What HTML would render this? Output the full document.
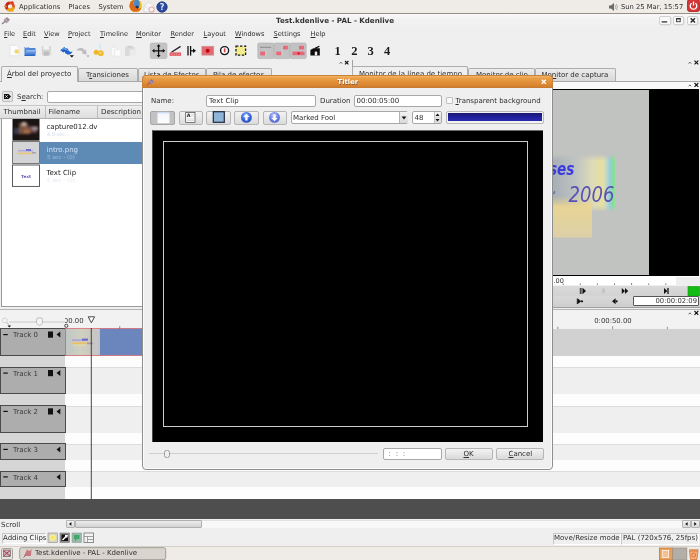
<!DOCTYPE html>
<html><head><meta charset="utf-8"><title>Kdenlive</title>
<style>
*{box-sizing:border-box;margin:0;padding:0}
html,body{width:700px;height:560px;overflow:hidden;background:#efefef;font-family:"DejaVu Sans","Liberation Sans",sans-serif;font-size:7px;color:#2e2e2e}
.a{position:absolute}
.t{position:absolute;z-index:3;white-space:nowrap;line-height:10px;font-size:7px}
u{text-decoration:underline;text-underline-offset:.6px;text-decoration-thickness:0.6px}
.tab{position:absolute;top:68px;height:13px;background:linear-gradient(#ececec,#d8d8d8);border:1px solid #adadad;border-bottom:none;border-radius:2px 2px 0 0}
.tab.on{top:65px;height:17px;background:#efefef;z-index:2}
.trk{position:absolute;left:0;width:66px;background:#adadad;border:1px solid #4a4a4a}
.btn{position:absolute;background:linear-gradient(#f3f3f3,#dadada);border:1px solid #b6b6b6;border-radius:2px}
.inp{position:absolute;background:#fff;border:1px solid #a8a8a8;border-radius:2px}
svg{position:absolute;overflow:visible}
</style></head><body>
<div id="root" style="position:absolute;left:0;top:0;width:700px;height:560px;will-change:transform">
<div class="a" style="left:0;top:0;width:700px;height:14px;background:#efebe7;border-bottom:1px solid #979088"></div>
<svg style="left:4px;top:0" width="12" height="13" viewBox="0 0 12 13"><circle cx="6" cy="6.5" r="3.6" fill="none" stroke="#d9541e" stroke-width="2.6"/><circle cx="6" cy="6.5" r="3.6" fill="none" stroke="#f0a513" stroke-width="2.6" stroke-dasharray="7.5 15.1" stroke-dashoffset="-1"/><circle cx="6" cy="6.5" r="3.6" fill="none" stroke="#c2221e" stroke-width="2.6" stroke-dasharray="7.5 15.1" stroke-dashoffset="-8.5"/><circle cx="1.6" cy="6.5" r="1.3" fill="#e8702a"/><circle cx="8.3" cy="2.6" r="1.3" fill="#d33"/><circle cx="8.3" cy="10.4" r="1.3" fill="#f0a513"/></svg>
<div class="t" style="left:19px;top:1.500px;font-size:6.750px">Applications</div>
<div class="t" style="left:68.500px;top:1.500px;font-size:6.750px">Places</div>
<div class="t" style="left:98.500px;top:1.500px;font-size:6.750px">System</div>
<svg style="left:129px;top:-1px" width="14" height="14" viewBox="0 0 14 14"><defs><clipPath id="ffc"><circle cx="6.700" cy="6.700" r="6.300"/></clipPath></defs><g clip-path="url(#ffc)"><rect width="14" height="14" fill="#efc01e"/><ellipse cx="7.800" cy="4.500" rx="2.900" ry="4.600" fill="#4a8ac8"/><ellipse cx="8" cy="8.300" rx="1.700" ry="1.900" fill="#26325e"/><path d="M0 0h6q-2.200 3-1 6.200q1.300 3.300 4.600 3.600q2-.1 3-1.400q-.6 3.600-4 4.800h-8.600z" fill="#e0681a"/><path d="M4.500 12.800q3 .6 5.500-1" stroke="#f0a020" stroke-width=".8" fill="none"/></g></svg>
<svg style="left:143px;top:1px" width="12" height="12" viewBox="0 0 12 12"><path d="M1 5 L6 1 L11 5 L11 11 L1 11Z" fill="#f6f6f6" stroke="#cfcfcf" stroke-width=".6"/><path d="M1 5 L6 8 L11 5" fill="none" stroke="#d8d8d8" stroke-width=".6"/><circle cx="8.5" cy="8.5" r="2.6" fill="#faf0f0" stroke="#dc9098" stroke-width=".8"/></svg>
<svg style="left:156px;top:1px" width="12" height="12" viewBox="0 0 12 12"><circle cx="6" cy="6" r="5.2" fill="#2a4a9c" stroke="#1c3478" stroke-width=".8"/><text x="6" y="9" font-size="8" font-weight="bold" fill="#dfe8ff" text-anchor="middle" font-family="DejaVu Sans">?</text></svg>
<svg style="left:608px;top:2px" width="10" height="10" viewBox="0 0 10 10"><path d="M1 3.5h2l3-2.5v8l-3-2.5h-2z" fill="#6a6a6a"/><path d="M7.2 3q1.2 2 0 4M8.4 2q2 3 0 6" stroke="#9a9a9a" stroke-width=".7" fill="none"/></svg>
<div class="t" style="left:621px;top:2px;font-size:6.750px">Sun 25 Mar, 15:57</div>
<svg style="left:687px;top:-1px" width="13" height="13" viewBox="0 0 13 13"><rect x=".5" y=".5" width="12" height="12" rx="2" fill="#d43535" stroke="#a82020" stroke-width=".8"/><path d="M4.6 4.2 A3.3 3.3 0 1 0 8.4 4.2" fill="none" stroke="#fff" stroke-width="1.3"/><path d="M6.5 2.6v4" stroke="#fff" stroke-width="1.3"/></svg>

<div class="a" style="left:0;top:14px;width:700px;height:14px;background:linear-gradient(#f9f9f9,#f2f2f2 35%,#efefef)"></div>
<svg style="left:1px;top:16px" width="10" height="9" viewBox="0 0 10 9"><path d="M2.500 4.500 L6 1 L9 3.800 L5.500 7.300Z" fill="#a08c98"/><path d="M1 8 L4 5.500" stroke="#8a7884" stroke-width="1.200"/><path d="M3.500 2.800 L7.200 6.200" stroke="#bca8b4" stroke-width="1.200"/></svg>
<div class="t" style="left:276px;top:16px;font-weight:bold;font-size:7.1px;color:#333">Test.kdenlive - PAL - Kdenlive</div>
<div class="btn" style="left:659px;top:15.500px;width:11.500px;height:9.300px;background:#f9f9f9;border-color:#d0d0d0;box-shadow:.5px .5px 0 #dcdcdc"></div>
<div class="btn" style="left:672.5px;top:15.500px;width:11.500px;height:9.300px;background:#f9f9f9;border-color:#d0d0d0;box-shadow:.5px .5px 0 #dcdcdc"></div>
<div class="btn" style="left:686.5px;top:15.500px;width:11.500px;height:9.300px;background:#f9f9f9;border-color:#d0d0d0;box-shadow:.5px .5px 0 #dcdcdc"></div>
<svg style="left:659px;top:15px" width="40" height="11" viewBox="0 0 40 11"><path d="M2.600 6.900h5.600" stroke="#333" stroke-width="1.300"/><rect x="17.600" y="3.700" width="3.600" height="3" fill="none" stroke="#333" stroke-width=".9"/><path d="M17.200 3.700h4.400" stroke="#333" stroke-width="1.400"/><path d="M31.700 3.300l4.300 4.200M36 3.300l-4.300 4.200" stroke="#222" stroke-width="1.300"/></svg>

<div class="t" style="left:4px;top:29px;font-size:6.600px"><u>F</u>ile</div>
<div class="t" style="left:23px;top:29px;font-size:6.600px"><u>E</u>dit</div>
<div class="t" style="left:44px;top:29px;font-size:6.600px"><u>V</u>iew</div>
<div class="t" style="left:68px;top:29px;font-size:6.600px"><u>P</u>roject</div>
<div class="t" style="left:100px;top:29px;font-size:6.600px"><u>T</u>imeline</div>
<div class="t" style="left:136px;top:29px;font-size:6.600px"><u>M</u>onitor</div>
<div class="t" style="left:170.5px;top:29px;font-size:6.600px"><u>R</u>ender</div>
<div class="t" style="left:203.5px;top:29px;font-size:6.600px"><u>L</u>ayout</div>
<div class="t" style="left:235px;top:29px;font-size:6.600px"><u>W</u>indows</div>
<div class="t" style="left:273.5px;top:29px;font-size:6.600px"><u>S</u>ettings</div>
<div class="t" style="left:310.5px;top:29px;font-size:6.600px"><u>H</u>elp</div>

<svg style="left:0;top:41px" width="350" height="20" viewBox="0 41 350 20">
<defs>
<linearGradient id="gfold" x1="0" y1="0" x2="0" y2="1"><stop offset="0" stop-color="#9ec4f2"/><stop offset="1" stop-color="#1f5fc4"/></linearGradient>
<filter id="b3"><feGaussianBlur stdDeviation="0.5"/></filter>
</defs>
<!-- new -->
<path d="M10 45.3h6l3 3v7.5h-9z" fill="#fdfdfd" stroke="#d8d8d8" stroke-width=".6"/>
<circle cx="16.7" cy="51.5" r="2.3" fill="#f4d774" filter="url(#b3)"/>
<!-- open -->
<path d="M24.5 47h4l1 1h6v8h-11z" fill="#4f86d6"/>
<path d="M26.5 50h10l-1.8 6h-10.2z" fill="url(#gfold)"/>
<path d="M25 47.6h3.3" stroke="#dbe9fb" stroke-width=".8"/>
<!-- save disabled -->
<rect x="41.8" y="46" width="9" height="9.6" rx=".8" fill="#d4d4d4"/>
<rect x="43.5" y="46" width="5.6" height="3.6" fill="#f2f2f2"/>
<rect x="43.8" y="51.6" width="5" height="4" fill="#bdbdbd"/>
<!-- undo -->
<path d="M60.2 50.2 L64.5 46.8 L65.2 48.6 Q68 47.6 68.6 50.6 Q69.6 52.6 72.6 51.4 Q71 55 67.4 54.4 Q64.6 53.6 64.6 51.4 L63.4 52.6Z" fill="#1f62cf"/>
<path d="M61.6 50 L64.2 48 L65 49.6 Q67.2 49 67.8 50.8" fill="none" stroke="#7fb2f0" stroke-width=".8"/>
<path d="M69.6 55.2h4.4l-2.2 2.2z" fill="#111"/>
<!-- redo disabled -->
<path d="M76.4 50.6 Q77.6 47.4 81.4 48 Q84 48.4 84.6 50.6 L86 49.6 L86.6 54.6 L81.6 53.6 L83 52.6 Q82 50.6 80 50.6 Q78 50.4 76.4 50.6Z" fill="#bcbcbc"/>
<path d="M86.6 55.6h2.8l-1.4 1.6z" fill="#9a9a9a"/>
<!-- yellow -->
<rect x="99.6" y="43.6" width="1.2" height="5" fill="#c5e2f3"/>
<circle cx="96.2" cy="52.2" r="2.5" fill="#efb62a"/>
<circle cx="100.8" cy="53.2" r="2.9" fill="#f0bd30"/>
<circle cx="100.4" cy="53" r="1" fill="#f8dc86"/>
<!-- copy disabled -->
<path d="M111.4 47.4h4l1.6 1.6v6.8h-5.600z" fill="#f9f9f9" stroke="#e0e0e0" stroke-width=".5"/>
<path d="M114.600 49.400h4.400l1.800 1.800v5h-6.200z" fill="#fbfbfb" stroke="#dedede" stroke-width=".5"/>
<path d="M113 45.400l1.600 1.600" stroke="#e2e2e2" stroke-width="1"/>
<!-- paste disabled -->
<rect x="125" y="46.600" width="9.600" height="9.400" rx="1" fill="#dadada"/>
<rect x="127.600" y="45.800" width="4.400" height="2" fill="#cfcfcf"/>
<rect x="129.600" y="49.600" width="6.400" height="6.600" fill="#eaeaea"/>
<!-- move tool pressed -->
<rect x="150.300" y="43" width="16.600" height="15.600" rx="1.500" fill="#c3c3c3" stroke="#b0b0b0" stroke-width=".6"/>
<path d="M158.600 45.400v10.800M153.200 50.800h10.800" stroke="#111" stroke-width="1.300"/>
<path d="M158.600 44.200l-2 2.400h4zM158.600 57.400l-2-2.400h4zM152 50.800l2.400-2v4zM165.200 50.800l-2.400-2v4z" fill="#111"/>
<!-- razor -->
<path d="M171.400 52.200 L180.600 46.400" stroke="#222" stroke-width="1.300"/>
<rect x="169.600" y="52.400" width="11.400" height="3.400" fill="#e05a60"/>
<path d="M171 54.100h9" stroke="#f2a8a8" stroke-width=".8" stroke-dasharray="1.500 1"/>
<!-- spacer -->
<path d="M188 46v9.600" stroke="#111" stroke-width="1.300"/>
<path d="M190.600 46v9.600" stroke="#111" stroke-width="1.300"/>
<path d="M191 50.800h3" stroke="#111" stroke-width="1.200"/>
<path d="M193 48.600l3 2.200l-3 2.200z" fill="#111"/>
<!-- record -->
<rect x="201.800" y="46.200" width="12" height="9" fill="#e06a72" stroke="#c9a0a4" stroke-width=".6"/>
<circle cx="207.600" cy="50.800" r="2" fill="#c80010"/>
<!-- circle -->
<circle cx="224.600" cy="50.600" r="4" fill="#fff" stroke="#151515" stroke-width="1.400"/>
<rect x="223.800" y="48.400" width="1.700" height="4" fill="#d64048"/>
<!-- yellow dashed -->
<rect x="236" y="46.200" width="9.600" height="9" fill="#f3ec8a" stroke="#1a1a1a" stroke-width="1.300" stroke-dasharray="2.400 1.600"/>
<!-- pressed 3 buttons -->
<rect x="257.800" y="43" width="16" height="15.600" rx="1.500" fill="#c2c2c2" stroke="#adadad" stroke-width=".6"/>
<rect x="274" y="43" width="16" height="15.600" rx="1.500" fill="#c2c2c2" stroke="#adadad" stroke-width=".6"/>
<rect x="290.200" y="43" width="16" height="15.600" rx="1.500" fill="#c2c2c2" stroke="#adadad" stroke-width=".6"/>
<path d="M260.500 47.400h10.600" stroke="#6a6a6a" stroke-width="1.200" stroke-dasharray="1 1"/>
<rect x="260.200" y="51.600" width="4.800" height="3.800" fill="#e8687a"/>
<path d="M266 49v7" stroke="#d2d2d2" stroke-width=".6"/>
<rect x="276.200" y="51.600" width="5" height="3.600" fill="#e8687a"/>
<rect x="282.800" y="45.800" width="5" height="3.600" fill="#e8687a"/>
<path d="M282.200 45v11" stroke="#d6d6d6" stroke-width=".6"/>
<rect x="292.400" y="51.600" width="5.600" height="3.600" fill="#e8687a"/>
<rect x="299" y="45.800" width="5" height="3.600" fill="#e8687a"/>
<rect x="298" y="51.600" width="6.500" height="3.600" fill="#e8687a"/>
<circle cx="298.600" cy="53.400" r="1.100" fill="#d01010"/>
<!-- black box icon -->
<path d="M310.400 55.400v-5.400l3-1.800h6.400v7.200z" fill="#0c0c0c"/>
<path d="M315 48.400l4.400-2.200" stroke="#0c0c0c" stroke-width="1.200"/>
<rect x="314.800" y="51.600" width="2.400" height="3.800" fill="#efefef"/>
<!-- ^ x -->
<path d="M339.600 63.600l1.300-1.500l1.300 1.500" stroke="#444" stroke-width=".8" fill="none"/>
<path d="M345 61l3.400 3.400M348.400 61l-3.400 3.400" stroke="#111" stroke-width="1.100"/>
<path d="M688.600 63.600l1.300-1.500l1.300 1.500" stroke="#444" stroke-width=".8" fill="none"/>
<path d="M694.500 60.600l3.800 3.800M698.300 60.600l-3.800 3.800" stroke="#111" stroke-width="1.100"/>
</svg>
<div class="t" style="left:334.600px;top:44.800px;font-family:'Liberation Serif',serif;font-size:12.500px;font-weight:bold;line-height:13px;color:#1a1a1a">1</div>
<div class="t" style="left:351.300px;top:44.800px;font-family:'Liberation Serif',serif;font-size:12.500px;font-weight:bold;line-height:13px;color:#1a1a1a">2</div>
<div class="t" style="left:367.600px;top:44.800px;font-family:'Liberation Serif',serif;font-size:12.500px;font-weight:bold;line-height:13px;color:#1a1a1a">3</div>
<div class="t" style="left:384px;top:44.800px;font-family:'Liberation Serif',serif;font-size:12.500px;font-weight:bold;line-height:13px;color:#1a1a1a">4</div>

<div class="a" style="left:0;top:81px;width:700px;height:1px;background:#a8a8a8"></div>
<div class="tab on" style="left:1px;width:77px;top:66px;height:16px"></div>
<div class="tab" style="left:78px;width:60px"></div>
<div class="tab" style="left:138px;width:68px"></div>
<div class="tab" style="left:206px;width:66px"></div>
<div class="t" style="left:7px;top:69px"><u>Á</u>rbol del proyecto</div>
<div class="t" style="left:86px;top:69.700px">T<u>r</u>ansiciones</div>
<div class="t" style="left:144px;top:69.700px">Lista de Efectos</div>
<div class="t" style="left:213px;top:69.700px">Pila de efectos</div>
<div class="a" style="left:351.500px;top:60px;width:1px;height:8px;background:#a2a2a2"></div>
<div class="tab on" style="left:351.500px;width:116.500px;top:65.600px;height:16.400px"></div>
<div class="tab" style="left:468px;width:67px"></div>
<div class="tab" style="left:535px;width:81px"></div>
<div class="t" style="left:359px;top:69.300px">Monitor de la línea de tiempo</div>
<div class="t" style="left:476px;top:69.700px">Monitor de clip</div>
<div class="t" style="left:541.5px;top:69.700px">Mo<u>n</u>itor de captura</div>

<div class="a" style="left:0;top:82px;width:143px;height:228px;background:#efefef"></div>
<!-- search row -->
<svg style="left:2px;top:91px" width="11" height="11" viewBox="0 0 11 11"><rect x=".4" y=".4" width="10.200" height="10.200" rx="1.500" fill="#e4e4e4" stroke="#a8a8a8" stroke-width=".7"/><path d="M2 3h4.500l2.500 2.500l-2.500 2.500h-4.500z" fill="#111"/><path d="M3.300 4.300l2.400 2.400M5.700 4.300l-2.400 2.400" stroke="#fff" stroke-width=".8"/></svg>
<div class="t" style="left:17px;top:91.500px">S<u>e</u>arch:</div>
<div class="inp" style="left:47px;top:90.500px;width:100px;height:12.500px"></div>
<!-- header -->
<div class="a" style="left:0;top:105px;width:143px;height:13.500px;background:linear-gradient(#eeeeee,#dedede);border-top:1px solid #c8c8c8;border-bottom:1px solid #b0b0b0"></div>
<div class="a" style="left:45px;top:106px;width:1px;height:12px;background:#bcbcbc"></div>
<div class="a" style="left:97px;top:106px;width:1px;height:12px;background:#bcbcbc"></div>
<div class="t" style="left:3.500px;top:106.500px">Thumbnail</div>
<div class="t" style="left:48.500px;top:106.500px">Filename</div>
<div class="t" style="left:101px;top:106.500px">Description</div>
<!-- list -->
<div class="a" style="left:1px;top:118.500px;width:142px;height:188px;background:#fff;border-left:1px solid #9a9a9a;border-bottom:1px solid #9a9a9a"></div>
<div class="a" style="left:40px;top:141.500px;width:103px;height:22px;background:#5e8bb6"></div>
<svg style="left:12.100px;top:119px" width="28" height="68" viewBox="0 0 28 68">
<defs><filter id="b1"><feGaussianBlur stdDeviation="1.200"/></filter><filter id="b2"><feGaussianBlur stdDeviation=".6"/></filter>
<clipPath id="c1"><rect x=".5" y="0" width="27" height="21.600"/></clipPath></defs>
<rect x=".5" y="0" width="27" height="21.600" fill="#1a1413"/>
<g clip-path="url(#c1)" filter="url(#b1)"><rect x="7" y="4" width="9" height="11" fill="#7a5240"/><rect x="16" y="7" width="9" height="7" fill="#6a4a48"/><rect x="10" y="3" width="4" height="4" fill="#b8a8a0"/><rect x="20" y="8" width="6" height="3" fill="#9a8a90"/><rect x="2" y="9" width="5" height="6" fill="#3a3a52"/><rect x="12" y="10" width="6" height="5" fill="#a06848"/></g>
<rect x=".5" y="22.600" width="27" height="21.800" fill="#d2d4d6" stroke="#5a5a5a" stroke-width=".8"/>
<g filter="url(#b2)"><rect x="6" y="31" width="15" height="1.500" fill="#b8a8d8"/><rect x="5" y="33.500" width="16" height="1.800" fill="#e8c880"/><rect x="14" y="30" width="5" height="2" fill="#7070d0"/><rect x="20" y="33" width="4" height="1.500" fill="#a8a0b8"/></g>
<rect x=".5" y="46" width="27" height="21.400" fill="#fff" stroke="#4a4a4a" stroke-width=".9"/>
<text x="14" y="59.400" font-size="4.200" font-weight="bold" fill="#5f58b4" text-anchor="middle" font-family="DejaVu Sans">Text</text>
</svg>
<div class="t" style="left:46.500px;top:121.600px;color:#222">capture012.dv</div>
<div class="t" style="left:47px;top:128.500px;font-size:5px;color:#d0d8ea">4.8 sec...</div>
<div class="t" style="left:46.500px;top:144.600px;color:#cfe0f6">intro.png</div>
<div class="t" style="left:47px;top:152px;font-size:5.500px;color:#9dbbd8">5 sec - (0)</div>
<div class="t" style="left:46.500px;top:167.500px;color:#222">Text Clip</div>
<div class="t" style="left:47px;top:175px;font-size:5.500px;color:#e2e6ee">5 sec - (0)</div>

<!-- dock header -->
<div class="a" style="left:553px;top:82px;width:147px;height:7px;background:#f9f9f9"></div>
<svg style="left:0;top:0" width="700" height="100" viewBox="0 0 700 100"><path d="M688.600 86.300l1.300-1.500l1.300 1.500" stroke="#444" stroke-width=".8" fill="none"/><path d="M694.500 83l3.800 3.800M698.300 83l-3.800 3.800" stroke="#111" stroke-width="1.100"/></svg>
<div class="a" style="left:553px;top:88.600px;width:146px;height:187.600px;background:#000"></div>
<div class="a" style="left:553px;top:90px;width:96px;height:184.500px;background:#c1c3c1"></div>
<svg style="left:553px;top:90px;overflow:hidden" width="96" height="185" viewBox="553 90 96 185">
<defs>
<linearGradient id="mg1" x1="0" y1="0" x2="1" y2="0"><stop offset="0" stop-color="#a6aeb6"/><stop offset=".35" stop-color="#bcc2c0"/><stop offset=".62" stop-color="#dcdab8"/><stop offset=".8" stop-color="#e6e0a0"/><stop offset=".86" stop-color="#b8d8d0"/><stop offset=".9" stop-color="#98cce0"/><stop offset=".95" stop-color="#84e096"/><stop offset="1" stop-color="#a0dca0"/></linearGradient>
<linearGradient id="mg2" x1="0" y1="0" x2="0" y2="1"><stop offset="0" stop-color="#c1c2c1" stop-opacity="1"/><stop offset=".12" stop-color="#c1c2c1" stop-opacity="0"/><stop offset=".9" stop-color="#c1c2c1" stop-opacity="0"/><stop offset="1" stop-color="#c1c2c1" stop-opacity=".8"/></linearGradient>
<linearGradient id="mg3" x1="0" y1="0" x2="0" y2="1"><stop offset="0" stop-color="#e6d48e" stop-opacity="0"/><stop offset=".25" stop-color="#ecd690" stop-opacity=".9"/><stop offset="1" stop-color="#e2d2a4" stop-opacity=".85"/></linearGradient>
<filter id="mb"><feGaussianBlur stdDeviation=".7"/></filter>
</defs>
<g filter="url(#mb)">
<rect x="552" y="154" width="64" height="57" fill="url(#mg1)"/>
<rect x="552" y="154" width="64" height="57" fill="url(#mg2)"/>
<rect x="552" y="196" width="40" height="41.500" fill="url(#mg3)"/>
</g>
<text x="549" y="174.500" font-size="17" font-style="italic" font-weight="bold" fill="#3a3ae0" font-family="DejaVu Sans, Liberation Sans, sans-serif" textLength="25.500" lengthAdjust="spacingAndGlyphs">ses</text>
<text x="568.500" y="201.600" font-size="22" font-style="italic" fill="#5a52b4" font-family="DejaVu Sans, Liberation Sans, sans-serif" textLength="46" lengthAdjust="spacingAndGlyphs">2006</text>
<path d="M552 194q3-.5 2.500-3" stroke="#6a62b0" stroke-width="1.200" fill="none"/>
</svg>
<!-- ruler -->
<div class="a" style="left:553px;top:276.200px;width:147px;height:9.300px;background:#fff"></div>
<div class="t" style="left:553.500px;top:275.500px;font-size:6.500px;color:#333">.00</div>
<svg style="left:553px;top:277px" width="147" height="9" viewBox="553 277 147 9"><path d="M563.200 283.500v1.500M580.300 283.500v1.500M597.400 283.500v1.500M614.500 283.500v1.500M631.600 283v2M648.700 283.500v1.500M665.800 283.500v1.500M682.900 283.500v1.500" stroke="#555" stroke-width=".8"/><rect x="676" y="277" width="24" height="8" fill="#eeeeee"/></svg>
<!-- controls -->
<div class="a" style="left:553px;top:285.500px;width:147px;height:21.500px;background:linear-gradient(#dadada,#d2d2d2 48%,#d8d8d8 52%,#cecece)"></div>
<div class="a" style="left:553px;top:307px;width:147px;height:1px;background:#9e9e9e"></div>
<svg style="left:553px;top:285px" width="147" height="22" viewBox="553 285 147 22">
<path d="M580.300 288v6M582 288v6" stroke="#111" stroke-width=".9"/><path d="M582.800 288l3.200 3l-3.200 3z" fill="#111"/>
<rect x="602" y="288.500" width="3" height="4.500" fill="#c4c4c4"/>
<path d="M621.800 288l3.200 3l-3.200 3zM625 288l3.200 3l-3.200 3z" fill="#111"/>
<path d="M664 288l3.400 3l-3.400 3z" fill="#111"/><path d="M668 288v6" stroke="#111" stroke-width="1.300"/>
<rect x="688" y="286.500" width="11.500" height="9.500" fill="#12bc12" stroke="#0c9a0c" stroke-width=".6"/>
<path d="M577.300 298.500v5.600" stroke="#111" stroke-width="1"/><path d="M577.800 298.500l3.400 2.800l-3.400 2.800z" fill="#111"/><circle cx="582" cy="301.300" r="1.100" fill="#111"/>
<path d="M615.600 298.300l-3.600 3l3.600 3z" fill="#111"/><circle cx="616.600" cy="301.300" r="1.100" fill="#111"/>
<path d="M553 296.300h80" stroke="#d8d8d8" stroke-width=".6"/>
</svg>
<div class="inp" style="left:633px;top:296.300px;width:66px;height:10px;border-color:#555;border-radius:1px"></div>
<div class="t" style="left:655.500px;top:296.400px;font-size:6.800px;color:#333">00:00:02:09</div>

<div class="a" style="left:0;top:309px;width:700px;height:1px;background:#b4b4b4"></div>
<div class="a" style="left:0;top:310px;width:700px;height:188.500px;background:#f2f2f2"></div>
<!-- track rows right area -->
<div class="a" style="left:65px;top:328.500px;width:635px;height:27px;background:#d1d1d1"></div>
<div class="a" style="left:65px;top:355.500px;width:635px;height:11.500px;background:#fdfdfd"></div>
<div class="a" style="left:65px;top:367px;width:635px;height:27px;background:#efefef;border-top:1px solid #dcdcdc"></div>
<div class="a" style="left:65px;top:394px;width:635px;height:11.500px;background:#fdfdfd"></div>
<div class="a" style="left:65px;top:405.500px;width:635px;height:27px;background:#efefef;border-top:1px solid #dcdcdc"></div>
<div class="a" style="left:65px;top:432.500px;width:635px;height:11px;background:#fdfdfd"></div>
<div class="a" style="left:65px;top:443.500px;width:635px;height:16px;background:#efefef;border-top:1px solid #dcdcdc"></div>
<div class="a" style="left:65px;top:459.500px;width:635px;height:11.500px;background:#fdfdfd"></div>
<div class="a" style="left:65px;top:471px;width:635px;height:15.500px;background:#efefef;border-top:1px solid #dcdcdc"></div>
<div class="a" style="left:65px;top:486.500px;width:635px;height:12px;background:#fdfdfd"></div>
<!-- header column -->
<div class="a" style="left:0;top:328.500px;width:65px;height:170px;background:#d6d6d6"></div>
<div class="trk" style="top:328px;height:27.800px"></div>
<div class="trk" style="top:367px;height:27.300px"></div>
<div class="trk" style="top:405.300px;height:27.300px"></div>
<div class="trk" style="top:443.300px;height:16.500px"></div>
<div class="trk" style="top:470.800px;height:16px"></div>
<div class="t" style="left:13px;top:330.300px;color:#3a3a3a">Track 0</div>
<div class="t" style="left:13px;top:368.800px;color:#3a3a3a">Track 1</div>
<div class="t" style="left:13px;top:407.100px;color:#3a3a3a">Track 2</div>
<div class="t" style="left:13px;top:445.100px;color:#3a3a3a">Track 3</div>
<div class="t" style="left:13px;top:472.600px;color:#3a3a3a">Track 4</div>
<svg style="left:0;top:310px" width="145" height="190" viewBox="0 310 145 190">
<defs><linearGradient id="cg1" x1="0" y1="0" x2="1" y2="0"><stop offset="0" stop-color="#bfc6c4"/><stop offset=".45" stop-color="#cfd0c0"/><stop offset=".75" stop-color="#c9c8c0"/><stop offset="1" stop-color="#c4c6c8"/></linearGradient><filter id="tb"><feGaussianBlur stdDeviation=".6"/></filter></defs>
<!-- minus signs and icons -->
<g fill="#111">
<rect x="3.300" y="334" width="4.500" height="1.200"/><rect x="3.300" y="372.500" width="4.500" height="1.200"/><rect x="3.300" y="410.800" width="4.500" height="1.200"/><rect x="3.300" y="448.800" width="4.500" height="1.200"/><rect x="3.300" y="476.300" width="4.500" height="1.200"/>
<rect x="48" y="331.500" width="5" height="6.200"/><rect x="48" y="370" width="5" height="6.200"/><rect x="48" y="408.300" width="5" height="6.200"/>
<path d="M60.300 331.600v6l-3.800-3z"/><path d="M60.300 370.100v6l-3.800-3z"/><path d="M60.300 408.400v6l-3.800-3z"/><path d="M60.300 446.400v6l-3.800-3z"/><path d="M60.300 473.900v6l-3.800-3z"/>
</g>
<!-- clips -->
<rect x="65.400" y="328.400" width="34" height="27" fill="url(#cg1)" stroke="#dc6a78" stroke-width=".8"/>
<g filter="url(#tb)"><rect x="72" y="339.300" width="15" height="1.600" fill="#b0a0d8"/><rect x="72" y="342.300" width="17" height="1.600" fill="#ecc068"/><rect x="73" y="344.600" width="13" height="1.200" fill="#e8d8a0"/><rect x="82" y="338.600" width="6" height="2" fill="#6a68d0"/><rect x="87" y="342.600" width="6" height="1.600" fill="#a098b0"/></g>
<rect x="99.400" y="328.400" width="46" height="27" fill="#6b86bd" stroke="#dc6a78" stroke-width=".8"/><path d="M99.400 329v26" stroke="#c4c8cc" stroke-width="1"/>
<path d="M119.750 326.200v2.600" stroke="#c04050" stroke-width=".8"/>
<!-- cursor -->
<path d="M91.300 328v171" stroke="#333" stroke-width=".9"/>
<!-- marker triangle -->
<path d="M88.200 316.800h6.400l-3.200 6z" fill="#fff" stroke="#333" stroke-width=".9"/>
<!-- zoom slider -->
<path d="M9 322h56" stroke="#c8c8c8" stroke-width="1"/>
<path d="M36.500 319.500q0-1.500 1.500-1.500h3q1.500 0 1.500 1.500v3.500l-3 3l-3-3z" fill="#f4f4f4" stroke="#a8a8a8" stroke-width=".7"/>
<circle cx="4.800" cy="320.500" r="2.400" fill="#f2f4f8" stroke="#c0c4cc" stroke-width=".7"/><path d="M6.800 322.500l2 2" stroke="#a0a0a0" stroke-width="1"/>
<path d="M7.500 325.500h3.600l-1.800 2z" fill="#111"/>
<circle cx="66.300" cy="325.800" r="1.600" fill="none" stroke="#222" stroke-width=".8"/>
</svg>
<div class="t" style="left:65px;top:316.200px;width:18.600px;overflow:hidden;direction:rtl;font-size:6.900px;color:#333"><span style="direction:ltr;unicode-bidi:bidi-override">0:00:00.00</span></div>
<div class="t" style="left:594.200px;top:316.200px;font-size:6.900px;color:#333">0:00:50.00</div>
<svg style="left:550px;top:310px" width="150" height="20" viewBox="550 310 150 20"><path d="M557.800 326.800v2.200M612.700 326.300v2.700M667.300 326.800v2.200" stroke="#666" stroke-width=".7"/><path d="M688.600 314.300l1.300-1.500l1.300 1.500" stroke="#444" stroke-width=".8" fill="none"/><path d="M694.500 311l3.800 3.800M698.300 311l-3.800 3.800" stroke="#111" stroke-width="1.100"/></svg>

<div class="a" style="left:0;top:498.500px;width:700px;height:20.500px;background:#4e4e4e"></div>
<div class="a" style="left:0;top:519px;width:700px;height:27px;background:#efefef"></div>
<div class="t" style="left:1px;top:519.800px">Scroll</div>
<!-- scrollbar -->
<div class="a" style="left:66px;top:520px;width:634px;height:7.800px;background:#f8f8f8;border-top:1px solid #e2e2e2"></div>
<div class="btn" style="left:66px;top:520px;width:8.500px;height:7.800px;border-color:#b4b4b4;border-radius:1px"></div>
<div class="btn" style="left:75px;top:520px;width:127px;height:7.800px;background:linear-gradient(#ececec,#d2d2d2);border-color:#b0b0b0;border-radius:1px"></div>
<div class="btn" style="left:682px;top:520px;width:9px;height:7.800px;border-color:#b4b4b4;border-radius:1px"></div>
<div class="btn" style="left:691px;top:520px;width:9px;height:7.800px;border-color:#b4b4b4;border-radius:1px"></div>
<svg style="left:0;top:519px" width="700" height="28" viewBox="0 519 700 28">
<path d="M71.400 522v3.800l-2.400-1.900zM687.600 522v3.800l-2.400-1.900zM694.200 522v3.800l2.400-1.900z" fill="#111"/>
<!-- status icons -->
<rect x="48" y="533" width="9.500" height="9.500" fill="#d8d4c4" stroke="#8a8a8a" stroke-width=".6"/><circle cx="52.700" cy="537.700" r="2.600" fill="#f6e85a" stroke="#fdf8c0" stroke-width=".8"/>
<rect x="60" y="533" width="9.500" height="9.500" fill="#8c8c8c" stroke="#7a7a7a" stroke-width=".6"/><rect x="61.500" y="534.500" width="6.500" height="6.500" fill="#111"/><path d="M62.500 540l5-5" stroke="#fff" stroke-width="1.400"/><rect x="65" y="535" width="2.500" height="2.500" fill="#fff"/>
<rect x="72" y="533" width="9.500" height="9.500" fill="#9ab8a8" stroke="#8aa094" stroke-width=".6"/><rect x="74" y="535" width="5.500" height="4" fill="#3fa86c"/><path d="M75 539l0 2.500l2-2.500z" fill="#3fa86c"/>
<rect x="84" y="533" width="9.500" height="9.500" fill="#f4f4f4" stroke="#8a8a8a" stroke-width="1"/><path d="M84 536.500h9.500M87.500 536.500v6M87.500 539.500h6" stroke="#8a8a8a" stroke-width=".8"/>
</svg>
<div class="a" style="left:1.500px;top:532.500px;width:44px;height:11px;border:1px solid #c6c6c6;border-right-color:#fff;border-bottom-color:#fff;background:#f1f1f1"></div>
<div class="t" style="left:3px;top:533px">Adding Clips</div>
<div class="a" style="left:552.500px;top:532.500px;width:68px;height:12px;border:1px solid #c6c6c6;border-right-color:#fff;border-bottom-color:#fff"></div>
<div class="a" style="left:621px;top:532.500px;width:78px;height:12px;border:1px solid #c6c6c6;border-right-color:#fff;border-bottom-color:#fff"></div>
<div class="t" style="left:554px;top:533.300px">Move/Resize mode</div>
<div class="t" style="left:623px;top:533.300px">PAL (720x576, 25fps)</div>

<div class="a" style="left:0;top:0;width:700px;height:560px;z-index:10">
<div class="a" style="left:141.500px;top:75px;width:411.500px;height:394.800px;background:#efefef;border:1px solid #8e8e8e;border-radius:4px 4px 4px 4px;box-shadow:inset 0 0 0 1px #fbfbfb"></div>
<div class="a" style="left:141.500px;top:75px;width:411.500px;height:13px;background:linear-gradient(#f1b468 0%,#ea9e46 22%,#e08c36 65%,#d27f2e 100%);border:1px solid #c8823c;border-bottom-color:#c87a30;border-radius:4px 4px 0 0"></div>
<svg style="left:145.500px;top:77.500px" width="9" height="8" viewBox="0 0 9 8"><path d="M2.500 3.800 L5.500 1 L8 3.400 L5 6.200Z" fill="#8e7aa8"/><path d="M1 7 L3.500 4.800" stroke="#a85a60" stroke-width="1.100"/><path d="M3.300 2.400 L6.400 5.300" stroke="#b49ac0" stroke-width="1"/></svg>
<div class="t" style="left:337.600px;top:77px;font-weight:bold;font-size:6.800px;color:#fff;text-shadow:.5px .7px 0 #8a5a2a">Titler</div>
<svg style="left:541px;top:79px" width="6" height="6" viewBox="0 0 6 6"><path d="M.8.800l4 4M4.800.800l-4 4" stroke="#fff" stroke-width="1.300"/></svg>
<!-- row 1 -->
<div class="t" style="left:151px;top:95.900px">Name:</div>
<div class="inp" style="left:206px;top:94.500px;width:110px;height:12px"></div>
<div class="t" style="left:209px;top:95.900px">Text Clip</div>
<div class="t" style="left:320px;top:95.900px">Duration</div>
<div class="inp" style="left:354px;top:94.500px;width:87.500px;height:12px"></div>
<div class="t" style="left:356.500px;top:95.900px">00:00:05:00</div>
<div class="inp" style="left:445.500px;top:97px;width:7.200px;height:7.200px;border-radius:1px;border-color:#c2c2c2;background:#f8f8f8"></div>
<div class="t" style="left:455.500px;top:95.900px"><u>T</u>ransparent background</div>
<!-- row 2 buttons -->
<div class="btn" style="left:150.300px;top:110.500px;width:24.500px;height:14.300px;background:#c2c2c2;border-color:#a6a6a6"></div>
<div class="btn" style="left:178.500px;top:110.500px;width:24.300px;height:14.300px"></div>
<div class="btn" style="left:206.300px;top:110.500px;width:24.300px;height:14.300px"></div>
<div class="btn" style="left:234.300px;top:110.500px;width:24.300px;height:14.300px"></div>
<div class="btn" style="left:262.500px;top:110.500px;width:24.300px;height:14.300px"></div>
<svg style="left:150px;top:108px" width="140" height="18" viewBox="150 108 140 18">
<defs>
<radialGradient id="bl1" cx=".45" cy=".35" r=".7"><stop offset="0" stop-color="#9fc0ff"/><stop offset=".55" stop-color="#3a6ae4"/><stop offset="1" stop-color="#2040b0"/></radialGradient>
<radialGradient id="bl2" cx=".45" cy=".35" r=".7"><stop offset="0" stop-color="#d4d8ff"/><stop offset=".55" stop-color="#6c84e8"/><stop offset="1" stop-color="#4a5cc4"/></radialGradient>
<linearGradient id="wn" x1="0" y1="0" x2="0" y2="1"><stop offset="0" stop-color="#b8cdf0"/><stop offset=".2" stop-color="#f4f6fa"/><stop offset="1" stop-color="#fdfdfd"/></linearGradient>
</defs>
<rect x="157.500" y="111.800" width="12" height="11.400" fill="url(#wn)"/>
<rect x="185.700" y="112.500" width="9.300" height="10" fill="#fbfbfb" stroke="#444" stroke-width=".7"/>
<text x="186.800" y="117.300" font-size="4.800" font-weight="bold" fill="#111" font-family="DejaVu Sans">A</text>
<path d="M191 114.500h3M191 116h3M187 119h7M187 120.500h7" stroke="#c8c8c8" stroke-width=".6"/>
<rect x="213.300" y="111.700" width="11" height="10.600" fill="#8fb4da" stroke="#1e2a3a" stroke-width="1.200"/>
<circle cx="246.400" cy="117.400" r="5.400" fill="url(#bl1)"/>
<path d="M246.400 113.800l3.100 3.300h-2v3.300h-2.200v-3.300h-2z" fill="#fff"/>
<circle cx="274.500" cy="117.400" r="5.400" fill="url(#bl2)"/>
<path d="M274.500 121.200l3.100-3.300h-2v-3.300h-2.200v3.300h-2z" fill="#fff"/>
</svg>
<!-- combo -->
<div class="inp" style="left:290.500px;top:111px;width:117.800px;height:12.800px"></div>
<div class="a" style="left:399.300px;top:111.600px;width:8.500px;height:11.600px;background:linear-gradient(#f4f4f4,#d8d8d8);border-left:1px solid #b4b4b4"></div>
<svg style="left:400px;top:114px" width="8" height="8" viewBox="0 0 8 8"><path d="M1.600 2.600h4.800l-2.400 3z" fill="#111"/></svg>
<div class="t" style="left:293px;top:112.500px">Marked Fool</div>
<!-- spin -->
<div class="inp" style="left:412px;top:111px;width:29.500px;height:12.800px"></div>
<div class="a" style="left:433.500px;top:111.600px;width:7.500px;height:11.600px;background:linear-gradient(#f4f4f4,#dcdcdc);border-left:1px solid #c0c0c0"></div>
<svg style="left:434px;top:112px" width="8" height="11" viewBox="0 0 8 11"><path d="M1.500 4h4l-2-2.600zM1.500 7h4l-2 2.600z" fill="#111"/><path d="M0 5.500h7" stroke="#c8c8c8" stroke-width=".6"/></svg>
<div class="t" style="left:414.500px;top:112.500px">48</div>
<!-- color button -->
<div class="btn" style="left:445.500px;top:111px;width:98px;height:12.600px;background:#f2f2f2;border-color:#b8b8b8"></div>
<div class="a" style="left:447.500px;top:113px;width:94px;height:8.200px;background:linear-gradient(#191970,#2222a0 60%,#2a2ab0)"></div>
<!-- canvas -->
<div class="a" style="left:151.700px;top:129.700px;width:391.200px;height:312.300px;background:#000;border-top:1px solid #6a6a6a;border-left:1px solid #4a4a4a"></div>
<div class="a" style="left:162.800px;top:140.700px;width:365.600px;height:286.700px;border:.9px solid #cdcdcd"></div>
<!-- bottom row -->
<div class="a" style="left:149px;top:453.200px;width:229px;height:1.200px;background:#cfcfcf"></div>
<div class="a" style="left:164px;top:450px;width:5.800px;height:7.600px;background:#f0f0f0;border:.8px solid #9c9c9c;border-radius:2.500px"></div>
<div class="inp" style="left:382.500px;top:447.800px;width:59px;height:12.400px"></div>
<div class="t" style="left:388.600px;top:449px;color:#555;letter-spacing:4.700px">:::</div>
<div class="btn" style="left:445px;top:447.800px;width:48px;height:12.400px"></div>
<div class="btn" style="left:496.300px;top:447.800px;width:48px;height:12.400px"></div>
<div class="t" style="left:463.500px;top:448.800px"><u>O</u>K</div>
<div class="t" style="left:508.500px;top:448.800px"><u>C</u>ancel</div>
</div>

<div class="a" style="left:0;top:546px;width:700px;height:14px;background:#efebe7;border-top:1px solid #d6d0c8;z-index:20"></div>
<div class="a" style="left:1px;top:547.500px;width:11.500px;height:12px;border:1px solid #a8a49c;border-radius:1.500px;background:#e8e4de;z-index:21"></div>
<svg style="left:0;top:546px;z-index:22" width="700" height="14" viewBox="0 546 700 14">
<rect x="3.300" y="550" width="7" height="6.600" fill="#c8b8c0" stroke="#5a4a52" stroke-width=".6"/><path d="M3.500 550.500l6.500 5.500M10 550.500l-6.500 5.500" stroke="#b83040" stroke-width="1"/>
<rect x="19.700" y="547.700" width="146" height="12" rx="2" fill="#d9d5ce" stroke="#8e8a84" stroke-width=".8"/>
<path d="M24 556l3-6.500l2.500 1.500l2-2l-.5 7z" fill="#c87880"/><path d="M23.500 557.500l3-3" stroke="#8a6a90" stroke-width="1"/>
<rect x="659.400" y="548" width="13" height="12" fill="#e9a05c" stroke="#c87830" stroke-width=".8"/><rect x="662.200" y="550.500" width="6.500" height="7" fill="#f4c090" stroke="#fff" stroke-width=".7"/>
<rect x="672.800" y="548" width="14" height="12" fill="#b4aea8" stroke="#9a948c" stroke-width=".8"/>
<path d="M689.500 551h8.500l-1 8.500h-6.500z" fill="#f0b080" stroke="#d87030" stroke-width=".8"/><path d="M689 550h9.500" stroke="#d87030" stroke-width="1.200"/><circle cx="693.700" cy="555" r="2" fill="none" stroke="#e86820" stroke-width=".9"/>
</svg>
<div class="t" style="left:35px;top:548.400px;z-index:23">Test.kdenlive - PAL - Kdenlive</div>

</div>
</body></html>
